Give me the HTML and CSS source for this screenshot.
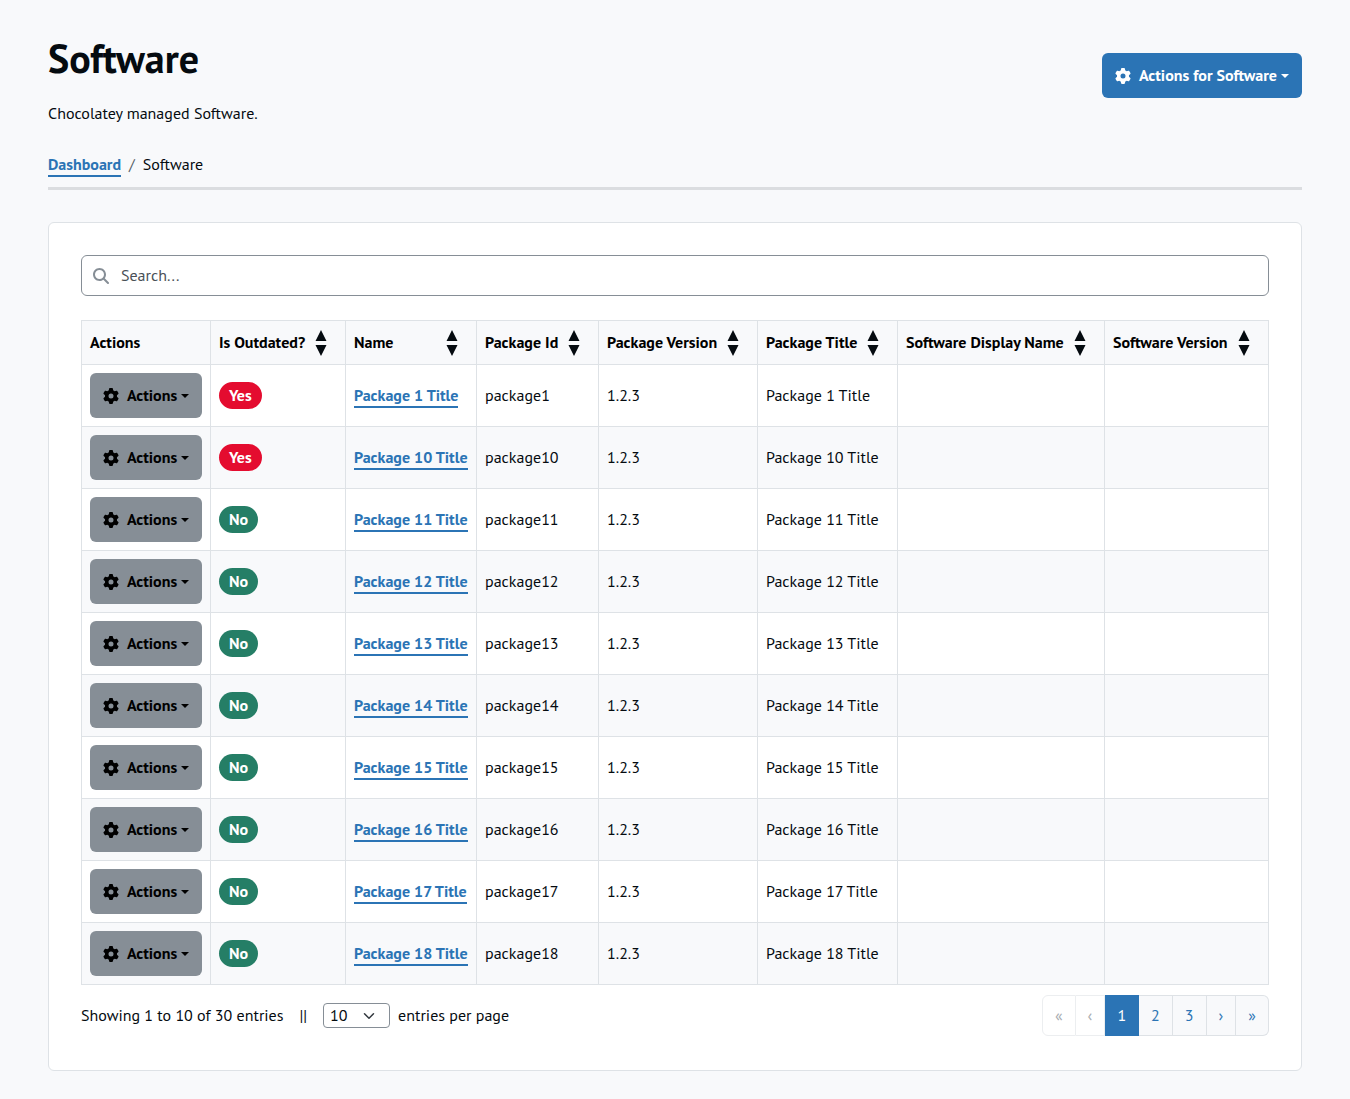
FILE: index.html
```html
<!DOCTYPE html>
<html lang="en">
<head>
<meta charset="utf-8">
<meta name="viewport" content="width=device-width, initial-scale=1">
<title>Software</title>
<link rel="stylesheet" href="styles.css">
</head>
<body>
<svg class="sprite" aria-hidden="true">
  <symbol id="gear" viewBox="0 0 512 512"><path d="M495.9 166.6c3.2 8.700.5 18.400-6.400 24.600l-43.300 39.400c1.100 8.300 1.700 16.800 1.700 25.400s-.6 17.100-1.700 25.400l43.300 39.400c6.900 6.200 9.600 15.900 6.400 24.600c-4.400 11.900-9.700 23.300-15.800 34.300l-4.700 8.100c-6.600 11-14 21.400-22.100 31.200c-5.900 7.200-15.700 9.600-24.500 6.800l-55.700-17.700c-13.400 10.300-28.200 18.900-44 25.400l-12.500 57.100c-2 9.100-9 16.300-18.200 17.800c-13.800 2.300-28 3.500-42.500 3.500s-28.700-1.200-42.500-3.500c-9.200-1.500-16.200-8.700-18.200-17.800l-12.500-57.100c-15.800-6.500-30.600-15.100-44-25.400L83.100 425.900c-8.800 2.800-18.600.3-24.500-6.800c-8.100-9.800-15.500-20.200-22.100-31.200l-4.700-8.100c-6.100-11-11.400-22.400-15.800-34.300c-3.200-8.700-.5-18.400 6.400-24.600l43.300-39.400C64.600 273.100 64 264.600 64 256s.6-17.100 1.700-25.400L22.400 191.200c-6.900-6.200-9.600-15.900-6.400-24.600c4.400-11.900 9.700-23.300 15.800-34.300l4.700-8.100c6.600-11 14-21.400 22.100-31.200c5.900-7.200 15.700-9.600 24.500-6.800l55.700 17.700c13.400-10.300 28.200-18.900 44-25.400l12.500-57.100c2-9.100 9-16.300 18.200-17.800C227.300 1.200 241.500 0 256 0s28.700 1.200 42.500 3.500c9.200 1.500 16.200 8.700 18.200 17.800l12.500 57.100c15.800 6.500 30.600 15.100 44 25.400l55.700-17.700c8.800-2.800 18.600-.3 24.500 6.800c8.100 9.800 15.500 20.200 22.100 31.200l4.700 8.100c6.100 11 11.400 22.400 15.800 34.300zM256 336a80 80 0 1 0 0-160 80 80 0 1 0 0 160z"/></symbol>
  <symbol id="search" viewBox="0 0 512 512"><path d="M416 208c0 45.900-14.900 88.300-40 122.700L502.600 457.400c12.500 12.500 12.500 32.800 0 45.300s-32.800 12.500-45.300 0L330.700 376c-34.400 25.200-76.800 40-122.700 40C93.100 416 0 322.900 0 208S93.100 0 208 0S416 93.100 416 208zM208 352a144 144 0 1 0 0-288 144 144 0 1 0 0 288z"/></symbol>
  <symbol id="sort" viewBox="0 0 12 26"><path d="M6 0l5.500 11H.5zM6 26L.5 15h11z"/></symbol>
</svg>
<main class="page">
  <header class="page-header">
    <div>
      <h1>Software</h1>
      <p class="lead">Chocolatey managed Software.</p>
    </div>
    <button type="button" class="btn btn-primary"><svg class="icon"><use href="#gear"/></svg>Actions for Software<span class="caret"></span></button>
  </header>
  <nav class="breadcrumb" aria-label="Breadcrumb">
    <a class="link" href="#">Dashboard</a><span class="slash">/</span><span>Software</span>
  </nav>
  <section class="card">
    <div class="search">
      <svg class="icon"><use href="#search"/></svg>
      <input type="search" placeholder="Search..." aria-label="Search">
    </div>
    <table class="grid">
      <colgroup><col class="c-actions"><col class="c-outdated"><col class="c-name"><col class="c-id"><col class="c-version"><col class="c-title"><col class="c-display"><col class="c-software"></colgroup>
      <thead>
        <tr>
          <th scope="col">Actions</th>
          <th scope="col"><div class="sortable">Is Outdated?<svg class="sort"><use href="#sort"/></svg></div></th>
          <th scope="col"><div class="sortable">Name<svg class="sort"><use href="#sort"/></svg></div></th>
          <th scope="col"><div class="sortable">Package Id<svg class="sort"><use href="#sort"/></svg></div></th>
          <th scope="col"><div class="sortable">Package Version<svg class="sort"><use href="#sort"/></svg></div></th>
          <th scope="col"><div class="sortable">Package Title<svg class="sort"><use href="#sort"/></svg></div></th>
          <th scope="col"><div class="sortable">Software Display Name<svg class="sort"><use href="#sort"/></svg></div></th>
          <th scope="col"><div class="sortable">Software Version<svg class="sort"><use href="#sort"/></svg></div></th>
        </tr>
      </thead>
      <tbody>
        <tr><td><button type="button" class="btn btn-secondary"><svg class="icon"><use href="#gear"/></svg>Actions<span class="caret"></span></button></td><td><span class="badge yes">Yes</span></td><td><a class="link" href="#">Package 1 Title</a></td><td>package1</td><td>1.2.3</td><td>Package 1 Title</td><td></td><td></td></tr>
        <tr><td><button type="button" class="btn btn-secondary"><svg class="icon"><use href="#gear"/></svg>Actions<span class="caret"></span></button></td><td><span class="badge yes">Yes</span></td><td><a class="link" href="#">Package 10 Title</a></td><td>package10</td><td>1.2.3</td><td>Package 10 Title</td><td></td><td></td></tr>
        <tr><td><button type="button" class="btn btn-secondary"><svg class="icon"><use href="#gear"/></svg>Actions<span class="caret"></span></button></td><td><span class="badge no">No</span></td><td><a class="link" href="#">Package 11 Title</a></td><td>package11</td><td>1.2.3</td><td>Package 11 Title</td><td></td><td></td></tr>
        <tr><td><button type="button" class="btn btn-secondary"><svg class="icon"><use href="#gear"/></svg>Actions<span class="caret"></span></button></td><td><span class="badge no">No</span></td><td><a class="link" href="#">Package 12 Title</a></td><td>package12</td><td>1.2.3</td><td>Package 12 Title</td><td></td><td></td></tr>
        <tr><td><button type="button" class="btn btn-secondary"><svg class="icon"><use href="#gear"/></svg>Actions<span class="caret"></span></button></td><td><span class="badge no">No</span></td><td><a class="link" href="#">Package 13 Title</a></td><td>package13</td><td>1.2.3</td><td>Package 13 Title</td><td></td><td></td></tr>
        <tr><td><button type="button" class="btn btn-secondary"><svg class="icon"><use href="#gear"/></svg>Actions<span class="caret"></span></button></td><td><span class="badge no">No</span></td><td><a class="link" href="#">Package 14 Title</a></td><td>package14</td><td>1.2.3</td><td>Package 14 Title</td><td></td><td></td></tr>
        <tr><td><button type="button" class="btn btn-secondary"><svg class="icon"><use href="#gear"/></svg>Actions<span class="caret"></span></button></td><td><span class="badge no">No</span></td><td><a class="link" href="#">Package 15 Title</a></td><td>package15</td><td>1.2.3</td><td>Package 15 Title</td><td></td><td></td></tr>
        <tr><td><button type="button" class="btn btn-secondary"><svg class="icon"><use href="#gear"/></svg>Actions<span class="caret"></span></button></td><td><span class="badge no">No</span></td><td><a class="link" href="#">Package 16 Title</a></td><td>package16</td><td>1.2.3</td><td>Package 16 Title</td><td></td><td></td></tr>
        <tr><td><button type="button" class="btn btn-secondary"><svg class="icon"><use href="#gear"/></svg>Actions<span class="caret"></span></button></td><td><span class="badge no">No</span></td><td><a class="link" href="#">Package 17 Title</a></td><td>package17</td><td>1.2.3</td><td>Package 17 Title</td><td></td><td></td></tr>
        <tr><td><button type="button" class="btn btn-secondary"><svg class="icon"><use href="#gear"/></svg>Actions<span class="caret"></span></button></td><td><span class="badge no">No</span></td><td><a class="link" href="#">Package 18 Title</a></td><td>package18</td><td>1.2.3</td><td>Package 18 Title</td><td></td><td></td></tr>
      </tbody>
    </table>
    <footer class="table-footer">
      <div class="summary">
        <span>Showing 1 to 10 of 30 entries</span>
        <span>||</span>
        <label class="page-size">
          <select><option>10</option><option>25</option><option>50</option></select>
          entries per page
        </label>
      </div>
      <nav class="pagination" aria-label="Pages">
        <a class="disabled" aria-disabled="true">«</a>
        <a class="disabled" aria-disabled="true">‹</a>
        <a class="current" href="#" aria-current="page">1</a>
        <a href="#">2</a>
        <a href="#">3</a>
        <a href="#">›</a>
        <a href="#">»</a>
      </nav>
    </footer>
  </section>
</main>
</body>
</html>
```
FILE: styles.css
```css
:root {
  --blue: #2b74b5;
  --ink: #050b10;
  --line: #dee2e6;
  --light: #f8f9fb;
  --grey: #868e96;
}
* { box-sizing: border-box; }
body {
  margin: 0;
  background: var(--light);
  color: var(--ink);
  font: 16px/23px "PT Sans", "Open Sans", "Noto Sans", sans-serif;
}
.sprite { display: none; }
.page { padding: 32px 48px 28px; }

.page-header {
  display: flex;
  justify-content: space-between;
  align-items: flex-start;
}
h1 { margin: 0; font-size: 40px; line-height: 52px; font-weight: 700; }
.lead { margin: 18px 0 0; }
.page-header .btn { margin-top: 21px; }

.btn {
  display: flex;
  align-items: center;
  justify-content: center;
  height: 45px;
  padding: 0 13px;
  border: 0;
  border-radius: 6px;
  font: inherit;
  font-weight: 700;
  cursor: pointer;
}
.btn-primary { background: var(--blue); color: #fff; }
.btn-secondary { width: 100%; background: var(--grey); color: #000; }
.icon { flex: none; width: 16px; height: 16px; fill: currentColor; }
.btn .icon { margin-right: 8px; }
.caret {
  margin-left: 4px;
  border: 4px solid transparent;
  border-top-color: currentColor;
  border-bottom: 0;
}

.link {
  padding-bottom: 1px;
  border-bottom: 2px solid var(--blue);
  color: var(--blue);
  font-weight: 700;
  text-decoration: none;
}
.breadcrumb {
  display: flex;
  gap: 8px;
  margin-top: 28px;
  padding-bottom: 10px;
  border-bottom: 3px solid #dbdde0;
}
.breadcrumb .link { line-height: 22px; padding: 0; }
.slash { color: #555e66; }

.card {
  margin-top: 32px;
  padding: 32px 32px 34px;
  background: #fff;
  border: 1px solid var(--line);
  border-radius: 6px;
}
.search {
  display: flex;
  align-items: center;
  gap: 12px;
  height: 41px;
  padding: 0 11px;
  border: 1px solid var(--grey);
  border-radius: 6px;
}
.search .icon { color: var(--grey); }
.search input {
  flex: 1;
  min-width: 0;
  height: 39px;
  padding: 0 0 1px;
  border: 0;
  outline: 0;
  background: none;
  color: inherit;
  font: inherit;
}
.search input::placeholder { color: #495057; opacity: 1; }

.grid {
  width: 100%;
  margin-top: 24px;
  border-collapse: collapse;
  table-layout: fixed;
}
.c-actions { width: 129px; }
.c-outdated { width: 135px; }
.c-name { width: 131px; }
.c-id { width: 122px; }
.c-version { width: 159px; }
.c-title { width: 140px; }
.c-display { width: 207px; }
.c-software { width: 164px; }
th, td {
  padding: 8px;
  border: 1px solid var(--line);
  text-align: left;
  vertical-align: middle;
  white-space: nowrap;
}
th { height: 44px; font-weight: 700; color: #000; }
thead tr, tbody tr:nth-child(even) { background: var(--light); }
.sortable {
  display: flex;
  align-items: center;
  justify-content: space-between;
  padding-right: 10px;
}
.sort { flex: none; width: 12px; height: 26px; fill: var(--ink); }
.badge {
  display: inline-block;
  padding: 0 10px;
  border-radius: 14px;
  color: #fff;
  line-height: 27px;
  font-weight: 700;
}
.yes { background: #e40c2f; }
.no { background: #257e66; }

.table-footer {
  display: flex;
  justify-content: space-between;
  margin-top: 10px;
}
.summary { display: flex; align-items: center; gap: 16px; }
.page-size { display: flex; align-items: center; gap: 8px; }
select {
  width: 67px;
  height: 25px;
  padding: 0 6px 1px;
  border: 1px solid var(--grey);
  border-radius: 4px;
  appearance: none;
  background: #fff url("data:image/svg+xml,%3Csvg xmlns='http://www.w3.org/2000/svg' viewBox='0 0 16 16'%3E%3Cpath fill='none' stroke='%23343a40' stroke-linecap='round' stroke-linejoin='round' stroke-width='2' d='m2 5 6 6 6-6'/%3E%3C/svg%3E") no-repeat right 14px center / 12px;
  color: var(--ink);
  font: inherit;
  line-height: 22px;
}

.pagination { display: flex; }
.pagination a {
  padding: 8px 12px;
  background: var(--light);
  border: 1px solid var(--line);
  border-left-width: 0;
  color: var(--blue);
  line-height: 23px;
  text-decoration: none;
}
.pagination a:first-child { border-left-width: 1px; border-radius: 6px 0 0 6px; }
.pagination a:last-child { border-radius: 0 6px 6px 0; }
.pagination .disabled { background: #fff; border-color: #eceef0; color: #a6abb0; }
.pagination .current { background: var(--blue); border-color: var(--blue); color: #fff; }
```
